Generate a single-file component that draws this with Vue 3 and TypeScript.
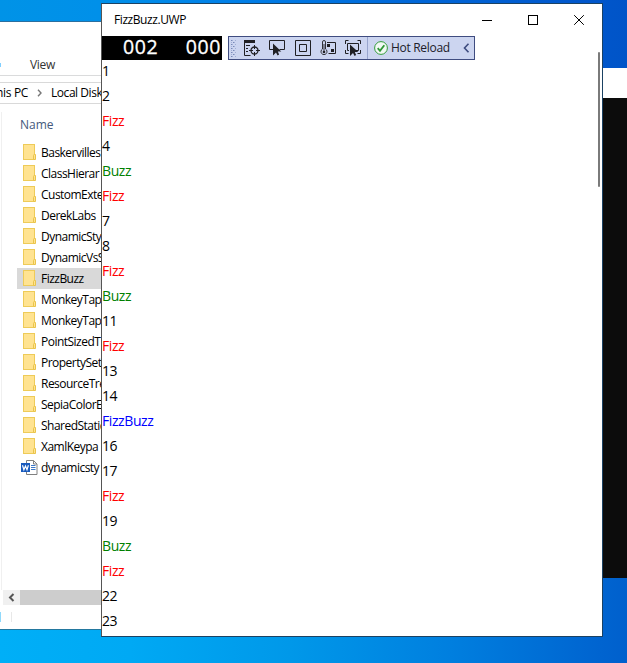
<script setup lang="ts">
interface Entry {
  label: string
  kind: string
}

const folders: string[] = [
  'Baskervilles', 'ClassHierar', 'CustomExte', 'DerekLabs', 'DynamicSty',
  'DynamicVsS', 'FizzBuzz', 'MonkeyTap', 'MonkeyTap', 'PointSizedT',
  'PropertySet', 'ResourceTre', 'SepiaColorE', 'SharedStatic', 'XamlKeypa',
]
const selected = 'FizzBuzz'

const entries: Entry[] = Array.from({ length: 23 }, (_, i) => {
  const n = i + 1
  if (n % 15 === 0) return { label: 'FizzBuzz', kind: 'fizzbuzz' }
  if (n % 3 === 0) return { label: 'Fizz', kind: 'fizz' }
  if (n % 5 === 0) return { label: 'Buzz', kind: 'buzz' }
  return { label: String(n), kind: 'number' }
})
</script>

<template>
  <main class="desktop">
    <section class="console"><div class="console-title"></div></section>

    <section class="explorer">
      <div class="ribbon"><i class="tab-edge"></i><span class="view">View</span></div>
      <div class="address">
        <span class="pc">his PC</span>
        <svg class="crumb" width="5" height="8" viewBox="0 0 5 8"><path d="M1 .8 4 4 1 7.200" /></svg>
        <span class="disk">Local Disk</span>
      </div>
      <div class="files">
        <div class="heading">Name</div>
        <div v-for="(name, i) in folders" :key="i" class="file" :class="{ selected: name === selected }">
          <svg class="icon" width="16" height="18" viewBox="0 0 16 18">
            <rect x="1.500" y=".5" width="11" height="15" fill="#ffe391" stroke="#eecb58" />
            <path d="M11.500 15.500v-4q0-1 1-1h1v5z" fill="#ffe391" stroke="#eac44b" />
          </svg>
          <span>{{ name }}</span>
        </div>
        <div class="file">
          <svg class="icon" width="16" height="18" viewBox="0 0 16 18">
            <path d="M4.500 1.500h7l3.500 3.500v10.500h-10.500z" fill="#fff" stroke="#808080" />
            <path d="M11.500 1.500v3.500h3.500" fill="none" stroke="#808080" />
            <path d="M9 6.500h4.500M9 8.500h4.500M9 10.500h4.500" stroke="#3c78c8" />
            <rect x="-1" y="4" width="9" height="9" fill="#185abd" />
            <path d="M.5 6.300 1.900 10.800 3.500 7 5 10.800 6.400 6.300" fill="none" stroke="#fff" stroke-width="1.200" />
          </svg>
          <span>dynamicsty</span>
        </div>
      </div>
      <div class="hscroll">
        <svg width="17" height="15" viewBox="0 0 17 15"><path d="M10.500 4 7 7.500 10.500 11" /></svg>
        <div class="hthumb"></div>
      </div>
      <div class="status"><i></i><b></b></div>
    </section>

    <section class="app-window">
      <header class="titlebar">
        <span class="title">FizzBuzz.UWP</span>
        <svg class="controls" width="138" height="32" viewBox="0 0 138 32">
          <path d="M18 16.500h10M64.500 11.500h9v9h-9z" shape-rendering="crispEdges" />
          <path d="M110.200 11.200l9.600 9.600M119.800 11.200l-9.600 9.600" />
        </svg>
      </header>
      <div class="tools">
        <div class="counter"><span>002</span><span>000</span></div>
        <div class="debugbar">
          <svg class="glyphs" width="138" height="22" viewBox="0 0 138 22">
            <g fill="#7889b8">
              <template v-for="r in 9" :key="r">
                <rect :x="r % 2 ? 2 : 4" :y="1 + r * 2" width="1.500" height="1" />
                <rect :x="r % 2 ? 6 : 2" :y="1 + r * 2" width="1" height="1" opacity=".5" />
              </template>
            </g>
            <g fill="none" stroke="#202024">
              <path d="M15 4.500h11" stroke-width="3" />
              <path d="M15.500 6v12.500h6M17 8.500h4M17 11.500h2M17 14.500h2" />
              <circle cx="25.500" cy="13.500" r="3.500" stroke-width="1.300" />
              <path d="M25.500 8v4M25.500 15v4M20 13.500h4M27 13.500h4" />
              <path d="M44 12.500h-3.500v-9h15v9h-5" />
              <path d="M44 6.500v12l3-3 1.600 3 1.500-1-1.300-3h3.500z" fill="#202024" stroke="none" />
              <path d="M66.500 3.500h15v15h-15zM70.500 7.500h7v7h-7z" />
              <path d="M93.500 12V5q0-1.500 1.500-1.500T96.500 5v7a3 3 0 1 1-3 0zM95 7v8" stroke-width=".9" />
              <circle cx="95" cy="15" r="1.300" fill="#202024" stroke="none" />
              <path d="M98 5.500h8.500v11h-7" />
              <path d="M98 7h3v3h-3zM102 12h3v3h-3z" fill="#202024" stroke="none" />
              <path d="M116.500 7V3.500h3M128.500 3.500h3V7M116.500 13v3.500h3M128.500 16.500h3V13M120 13.500h-1.500v-7h11v7h-3" />
              <path d="M121 7.500v11.500l3-3 1.600 3 1.500-1-1.300-3h3.500z" fill="#202024" stroke="none" />
            </g>
          </svg>
          <svg class="check" width="14" height="14" viewBox="0 0 14 14">
            <circle cx="7" cy="7" r="6.400" fill="#f1f8f4" stroke="#339c3b" />
            <path d="M3.700 7.200 6 9.800 10.300 4.200" fill="none" stroke="#2f9836" stroke-width="1.800" />
          </svg>
          <span class="reload">Hot Reload</span>
          <svg class="collapse" width="7" height="10" viewBox="0 0 7 10"><path d="M5.500 .8 1.500 5 5.500 9.200" /></svg>
        </div>
      </div>
      <div class="list">
        <div v-for="(entry, i) in entries" :key="i" class="entry" :class="entry.kind">{{ entry.label }}</div>
      </div>
      <div class="vthumb"></div>
    </section>
  </main>
</template>

<style>
body { overflow: hidden; }
</style>

<style scoped>
.desktop {
  position: relative;
  width: 627px;
  height: 663px;
  overflow: hidden;
  font: 12px/16px "Open Sans", "Noto Sans", sans-serif;
  color: #000;
  background:
    linear-gradient(90deg, #00aff7 0, #00a9f4 130px, #0098e9 290px, #007fdf 450px, #0064d0 600px, #0060cd) 0 560px / 100% 103px no-repeat,
    linear-gradient(90deg, #0093e7 0, #0090e9 100px, #0080e8 230px, #0067d8 410px, #0057cc 580px, #0054c8);
}
.console {
  position: absolute;
  left: 600px;
  top: 68px;
  width: 27px;
  height: 510px;
  background: #0c0c0c;
}
.console-title { height: 30px; background: #fff; }

.explorer {
  position: absolute;
  left: 0;
  top: 21px;
  width: 102px;
  height: 609px;
  box-sizing: border-box;
  display: flex;
  flex-direction: column;
  overflow: hidden;
  white-space: nowrap;
  background: #fff;
  border-top: 1px solid #2b6f9f;
  border-bottom: 1px solid #23789f;
}
.ribbon {
  flex: none;
  display: flex;
  align-items: center;
  height: 53px;
  border-bottom: 1px solid #dadbdc;
}
.tab-edge { width: 1px; height: 4px; margin-top: 33px; background: #80cfff; }
.view { margin: 32px 0 0 29px; color: #333; letter-spacing: -.3px; }
.address {
  flex: none;
  display: flex;
  align-items: center;
  height: 20px;
  margin-top: 6px;
  border-top: 1px solid #d9d9d9;
  border-bottom: 1px solid #d9d9d9;
}
.pc { flex: none; display: flex; justify-content: flex-end; width: 28px; letter-spacing: -.35px; }
.crumb { flex: none; margin-left: 9px; fill: none; stroke: #777; stroke-width: 1.400; }
.disk { margin-left: 9px; letter-spacing: -.45px; }
.files {
  flex: none;
  margin: 8px 0 0 1px;
  height: 478px;
  padding-left: 15px;
  border-left: 1px solid #f0f0f0;
}
.heading { height: 30px; padding: 5px 0 0 3px; box-sizing: border-box; color: #44597c; }
.file { display: flex; align-items: center; height: 21px; padding-left: 5px; letter-spacing: -.52px; }
.file.selected { background: #d9d9d9; }
.icon { flex: none; overflow: visible; margin-right: 3px; }
.hscroll { flex: none; display: flex; height: 15px; margin-left: 3px; background: #f0f0f0; }
.hscroll path { fill: none; stroke: #555; stroke-width: 2; }
.hthumb { flex: 1; background: #cdcdcd; }
.status { flex: none; display: flex; height: 10px; margin-top: 7px; }
.status i { width: 1px; background: #90d9fb; }
.status b { width: 1px; margin-left: 10px; background: #e8e8e8; }

.app-window {
  position: absolute;
  left: 101px;
  top: 3px;
  width: 502px;
  height: 634px;
  box-sizing: border-box;
  overflow: hidden;
  background: #fff;
  border: 1px solid #1b4263;
  border-left-color: #555;
}
.titlebar { display: flex; align-items: center; justify-content: space-between; height: 32px; padding-left: 12px; }
.title { letter-spacing: -.42px; }
.controls { fill: none; stroke: #000; }
.tools { display: flex; gap: 6px; height: 24px; }
.counter {
  display: flex;
  justify-content: space-between;
  width: 120px;
  padding: 0 1px 0 21px;
  box-sizing: border-box;
  background: #000;
  color: #fff;
  font-size: 19.500px;
  letter-spacing: .6px;
  line-height: 22px;
  -webkit-text-stroke: .3px #fff;
}
.debugbar {
  display: flex;
  align-items: center;
  width: 247px;
  box-sizing: border-box;
  border: 1px solid #3f4c80;
  background: #ccd5f0;
}
.glyphs { flex: none; border-right: 1px solid #98a5cd; }
.check { flex: none; margin-left: 6px; }
.reload { margin-left: 3px; white-space: nowrap; letter-spacing: -.3px; color: #20202a; }
.collapse { margin-left: auto; margin-right: 4px; fill: none; stroke: #3d4b7e; stroke-width: 1.600; }
.list { margin-top: -1px; }
.entry { height: 25px; font-size: 14px; line-height: 23px; letter-spacing: -.4px; }
.fizz { color: #f00; }
.buzz { color: #008000; }
.fizzbuzz { color: #00f; }
.vthumb {
  position: absolute;
  right: 2px;
  top: 48px;
  width: 2px;
  height: 135px;
  border-radius: 1px;
  background: #7a7a7a;
}
</style>
